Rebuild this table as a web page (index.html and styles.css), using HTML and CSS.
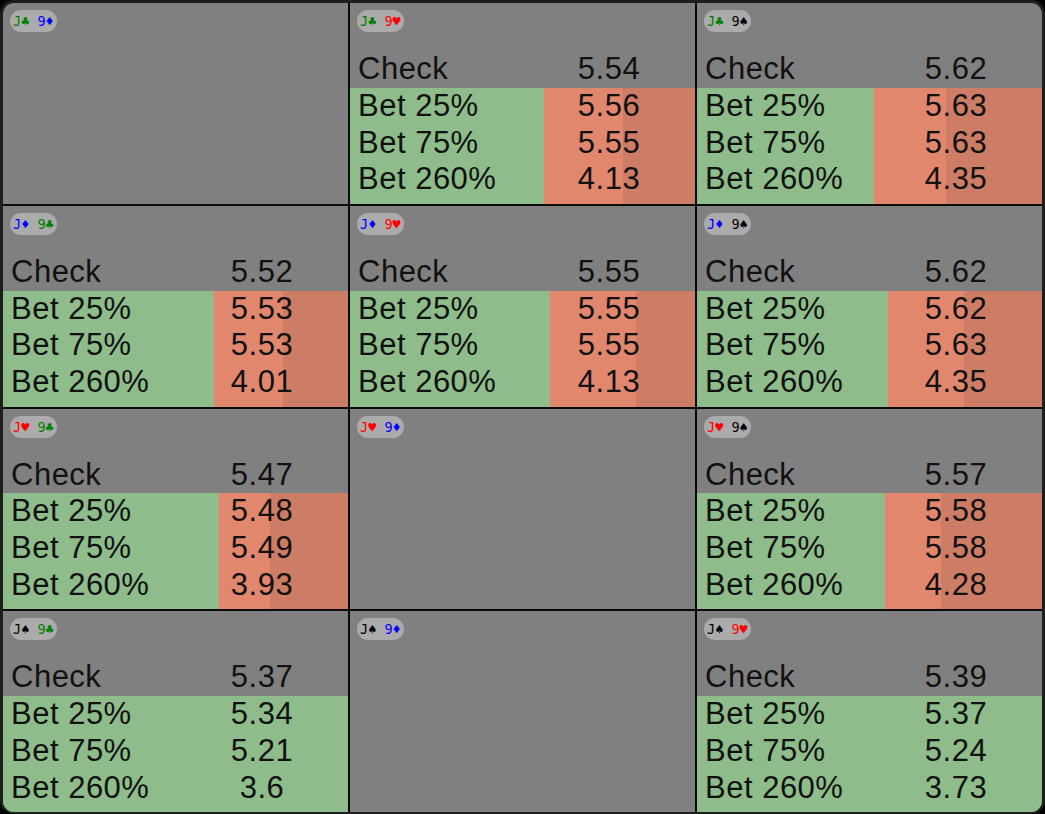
FILE: index.html
```html
<!DOCTYPE html>
<html>
<head>
<meta charset="utf-8">
<link rel="stylesheet" href="styles.css">
</head>
<body>
<div class="frame">
  <div class="grid">
    <div class="cell">
      <div class="hand"><span class="green">J♣</span> <span class="blue">9♦</span></div>
    </div>
    <div class="cell">
      <div class="hand"><span class="green">J♣</span> <span class="red">9♥</span></div>
      <div class="row"><span>Check</span><span class="val">5.54</span></div>
      <div class="bets" style="--red:151px;--dark:72px">
        <div class="row"><span>Bet 25%</span><span class="val">5.56</span></div>
        <div class="row"><span>Bet 75%</span><span class="val">5.55</span></div>
        <div class="row"><span>Bet 260%</span><span class="val">4.13</span></div>
      </div>
    </div>
    <div class="cell">
      <div class="hand"><span class="green">J♣</span> <span class="black">9♠</span></div>
      <div class="row"><span>Check</span><span class="val">5.62</span></div>
      <div class="bets" style="--red:168px;--dark:96px">
        <div class="row"><span>Bet 25%</span><span class="val">5.63</span></div>
        <div class="row"><span>Bet 75%</span><span class="val">5.63</span></div>
        <div class="row"><span>Bet 260%</span><span class="val">4.35</span></div>
      </div>
    </div>

    <div class="cell">
      <div class="hand"><span class="blue">J♦</span> <span class="green">9♣</span></div>
      <div class="row"><span>Check</span><span class="val">5.52</span></div>
      <div class="bets" style="--red:134px;--dark:65px">
        <div class="row"><span>Bet 25%</span><span class="val">5.53</span></div>
        <div class="row"><span>Bet 75%</span><span class="val">5.53</span></div>
        <div class="row"><span>Bet 260%</span><span class="val">4.01</span></div>
      </div>
    </div>
    <div class="cell">
      <div class="hand"><span class="blue">J♦</span> <span class="red">9♥</span></div>
      <div class="row"><span>Check</span><span class="val">5.55</span></div>
      <div class="bets" style="--red:145px;--dark:59px">
        <div class="row"><span>Bet 25%</span><span class="val">5.55</span></div>
        <div class="row"><span>Bet 75%</span><span class="val">5.55</span></div>
        <div class="row"><span>Bet 260%</span><span class="val">4.13</span></div>
      </div>
    </div>
    <div class="cell">
      <div class="hand"><span class="blue">J♦</span> <span class="black">9♠</span></div>
      <div class="row"><span>Check</span><span class="val">5.62</span></div>
      <div class="bets" style="--red:154px;--dark:78px">
        <div class="row"><span>Bet 25%</span><span class="val">5.62</span></div>
        <div class="row"><span>Bet 75%</span><span class="val">5.63</span></div>
        <div class="row"><span>Bet 260%</span><span class="val">4.35</span></div>
      </div>
    </div>

    <div class="cell">
      <div class="hand"><span class="red">J♥</span> <span class="green">9♣</span></div>
      <div class="row"><span>Check</span><span class="val">5.47</span></div>
      <div class="bets" style="--red:129px;--dark:78px">
        <div class="row"><span>Bet 25%</span><span class="val">5.48</span></div>
        <div class="row"><span>Bet 75%</span><span class="val">5.49</span></div>
        <div class="row"><span>Bet 260%</span><span class="val">3.93</span></div>
      </div>
    </div>
    <div class="cell">
      <div class="hand"><span class="red">J♥</span> <span class="blue">9♦</span></div>
    </div>
    <div class="cell">
      <div class="hand"><span class="red">J♥</span> <span class="black">9♠</span></div>
      <div class="row"><span>Check</span><span class="val">5.57</span></div>
      <div class="bets" style="--red:157px;--dark:101px">
        <div class="row"><span>Bet 25%</span><span class="val">5.58</span></div>
        <div class="row"><span>Bet 75%</span><span class="val">5.58</span></div>
        <div class="row"><span>Bet 260%</span><span class="val">4.28</span></div>
      </div>
    </div>

    <div class="cell">
      <div class="hand"><span class="black">J♠</span> <span class="green">9♣</span></div>
      <div class="row"><span>Check</span><span class="val">5.37</span></div>
      <div class="bets" style="--red:0px;--dark:0px">
        <div class="row"><span>Bet 25%</span><span class="val">5.34</span></div>
        <div class="row"><span>Bet 75%</span><span class="val">5.21</span></div>
        <div class="row"><span>Bet 260%</span><span class="val">3.6</span></div>
      </div>
    </div>
    <div class="cell">
      <div class="hand"><span class="black">J♠</span> <span class="blue">9♦</span></div>
    </div>
    <div class="cell">
      <div class="hand"><span class="black">J♠</span> <span class="red">9♥</span></div>
      <div class="row"><span>Check</span><span class="val">5.39</span></div>
      <div class="bets" style="--red:0px;--dark:0px">
        <div class="row"><span>Bet 25%</span><span class="val">5.37</span></div>
        <div class="row"><span>Bet 75%</span><span class="val">5.24</span></div>
        <div class="row"><span>Bet 260%</span><span class="val">3.73</span></div>
      </div>
    </div>
  </div>
</div>
</body>
</html>
```

FILE: styles.css
```css
html, body {
  margin: 0;
  padding: 0;
  background: #000;
}

.frame {
  width: 1045px;
  height: 814px;
  box-sizing: border-box;
  padding: 3px 3px 2px 3px;
  background: #1e1e1e;
  border-radius: 14px;
}

.grid {
  height: 100%;
  display: grid;
  grid-template-columns: repeat(3, 1fr);
  grid-template-rows: repeat(4, 1fr);
  gap: 2px;
  background: #0a0a0a;
  border-radius: 11px;
  overflow: hidden;
}

.cell {
  background: #808080;
  display: flex;
  flex-direction: column;
  font-family: "Liberation Sans", Arial, sans-serif;
  font-size: 31px;
  letter-spacing: 0.5px;
  color: #111;
}

.hand {
  align-self: flex-start;
  margin: 7px 0 0 7px;
  height: 22px;
  padding: 0 3px;
  border-radius: 11px;
  background: #ababab;
  font-family: "DejaVu Sans Mono", monospace;
  font-size: 13.5px;
  letter-spacing: 0;
  line-height: 22px;
  white-space: pre;
}

.green { color: #008000; }
.blue { color: #0000ff; }
.red { color: #ff0000; }
.black { color: #000; }

.cell > .row {
  margin-top: 19px;
}

.row {
  display: grid;
  grid-template-columns: 192px 118px;
  padding-left: 8px;
  height: 36.8px;
  box-sizing: border-box;
  padding-bottom: 1.5px;
  line-height: 35.3px;
}

.val {
  text-align: center;
}

.bets {
  flex: 1;
  background: linear-gradient(to left,
    #cd7c65 0 var(--dark),
    #e0876e var(--dark) var(--red),
    #8fbc8b var(--red));
}
```
